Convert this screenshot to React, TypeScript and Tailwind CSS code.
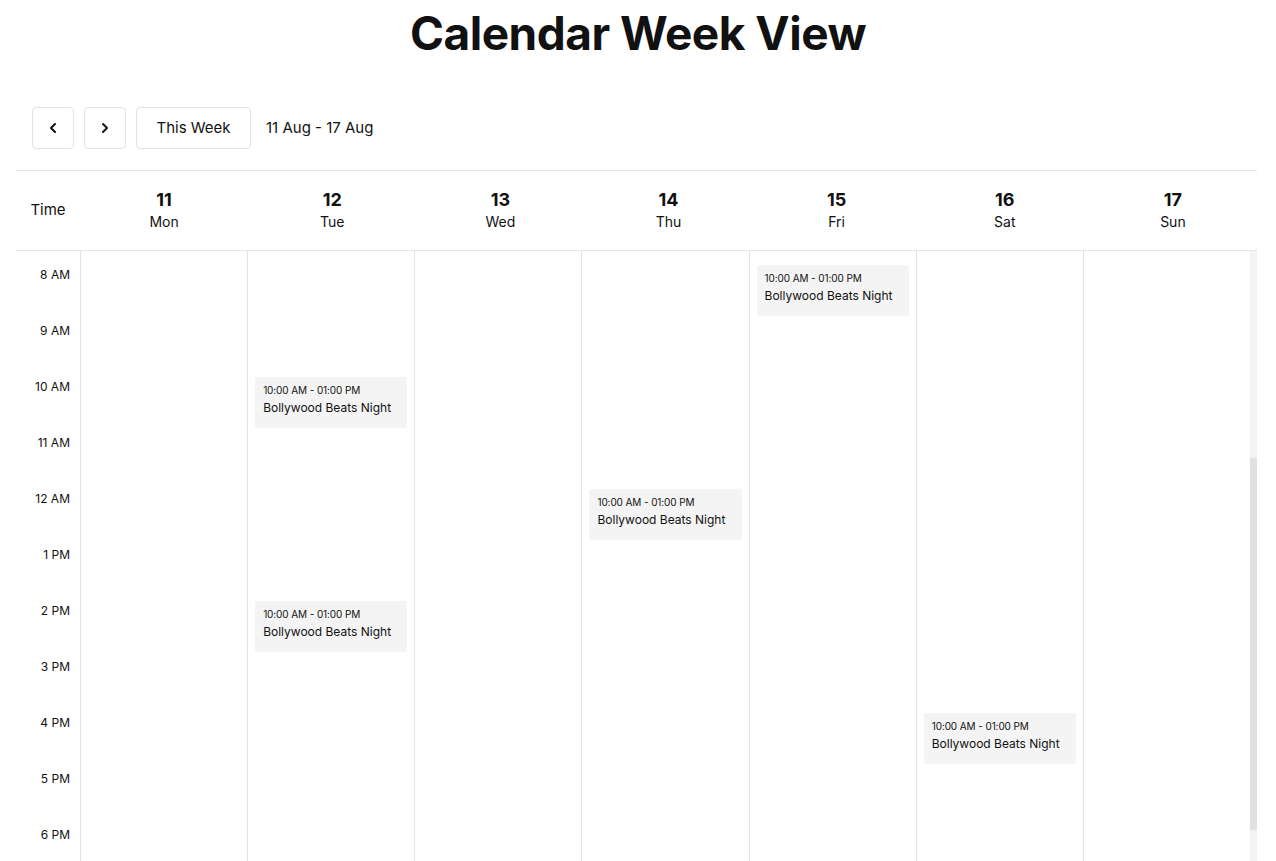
import { useEffect, useRef } from 'react';
import { ChevronLeft, ChevronRight } from 'lucide-react';

const days = [
  { num: 11, name: 'Mon' },
  { num: 12, name: 'Tue' },
  { num: 13, name: 'Wed' },
  { num: 14, name: 'Thu' },
  { num: 15, name: 'Fri' },
  { num: 16, name: 'Sat' },
  { num: 17, name: 'Sun' },
];

const hours = Array.from({ length: 24 }, (_, h) => {
  const suffix = h < 12 ? 'AM' : 'PM';
  const hr = h === 0 ? 12 : h > 12 ? h - 12 : h;
  // the source labels noon as "12 AM", keep it that way
  return `${hr} ${h === 12 ? 'AM' : suffix}`;
});

const ROW = 56;

// day index -> start hours of the events
const events: { day: number; hour: number }[] = [
  { day: 1, hour: 10 },
  { day: 1, hour: 14 },
  { day: 3, hour: 12 },
  { day: 4, hour: 8 },
  { day: 5, hour: 16 },
];

export default function App() {
  const bodyRef = useRef<HTMLDivElement>(null);

  useEffect(() => {
    if (bodyRef.current) bodyRef.current.scrollTop = 442;
  }, []);

  return (
    <div className="min-h-screen bg-white text-[#111] font-['Inter',sans-serif]">
      <h1 className="h-[57px] pt-[10px] text-center text-[46px] leading-none font-bold tracking-[-0.5px]">Calendar Week View</h1>

      <div className="mx-4 mt-[50px] w-[1241px]">
        {/* Toolbar */}
        <div className="flex items-center gap-[10px] px-4">
          <button className="flex h-[42px] w-[42px] items-center justify-center rounded border border-[#e3e3e3] bg-white">
            <ChevronLeft size={16} strokeWidth={3} />
          </button>
          <button className="flex h-[42px] w-[42px] items-center justify-center rounded border border-[#e3e3e3] bg-white">
            <ChevronRight size={16} strokeWidth={3} />
          </button>
          <button className="h-[42px] w-[115px] rounded border border-[#e3e3e3] bg-white text-[15px]">This Week</button>
          <span className="ml-[5px] text-[15px]">11 Aug - 17 Aug</span>
        </div>

        {/* Header */}
        <div className="mt-[21px] flex h-[81px] border-y border-[#e5e5e5]">
          <div className="flex w-16 shrink-0 items-center justify-center text-[15px]">Time</div>
          {days.map(d => (
            <div key={d.num} className="flex flex-1 flex-col items-center justify-center pb-[2px]">
              <span className="text-lg leading-6 font-bold">{d.num}</span>
              <span className="text-sm leading-5">{d.name}</span>
            </div>
          ))}
        </div>

        {/* Body */}
        <div className="flex">
          <div ref={bodyRef} className="h-[795px] flex-1 overflow-y-auto [scrollbar-width:none]">
            <div className="flex h-[1699px]">
              <div className="w-16 shrink-0">
                {hours.map(h => (
                  <div key={h} className="h-14 pt-[10px] pr-[10px] text-right text-xs leading-4">
                    {h}
                  </div>
                ))}
              </div>
              {days.map((d, i) => (
                <div key={d.num} className="relative flex-1 border-l border-[#e2e2e2]">
                  {events
                    .filter(e => e.day === i)
                    .map(e => (
                      <div
                        key={e.hour}
                        className="absolute right-[7px] left-[7px] h-[51px] rounded-[2px] bg-[#f4f4f4] px-2 pt-[6px]"
                        style={{ top: e.hour * ROW + 8 }}
                      >
                        <div className="text-[10px] leading-[14px] tracking-[-0.1px]">10:00 AM - 01:00 PM</div>
                        <div className="mt-[3px] text-xs leading-4">Bollywood Beats Night</div>
                      </div>
                    ))}
                </div>
              ))}
            </div>
          </div>
          {/* scrollbar */}
          <div className="h-[795px] w-[7px] shrink-0 bg-[#f3f3f3]">
            <div className="mt-[207px] h-[372px] bg-[#e1e1e1]" />
          </div>
        </div>
      </div>
    </div>
  );
}
